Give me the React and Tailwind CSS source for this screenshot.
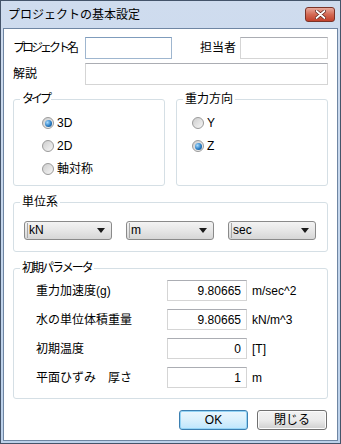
import React from 'react';

function Radio({ checked, label }) {
  return (
    <div className="flex items-center h-[22px] gap-[3px]">
      <span className="w-[12px] h-[12px] rounded-full border border-[#9a9a9a] bg-[linear-gradient(135deg,#cdcdcd,#f6f6f6)] flex items-center justify-center">
        {checked && (
          <span className="w-[7px] h-[7px] rounded-full bg-[radial-gradient(circle_at_35%_35%,#a8dcff,#2a7dc4_55%,#0d3f73)]" />
        )}
      </span>
      <span>{label}</span>
    </div>
  );
}

function Group({ title, className, legendClass, children }) {
  return (
    <fieldset className={`border border-[#d5dfe5] rounded-[3px] p-0 ${className}`}>
      <legend className={`ml-[6px] px-[2px] leading-[14px] ${legendClass || ''}`}>{title}</legend>
      {children}
    </fieldset>
  );
}

function Combo({ value }) {
  return (
    <div className="w-[88px] h-[19px] rounded-[3px] border border-[#8a8a8a] bg-[linear-gradient(#f3f3f3,#e6e6e6_50%,#d6d6d6)] flex items-center pl-[2px] pr-[6px]">
      <span className="flex-1 leading-[15px] border-l border-[#a8a8a8] pl-[1px]">{value}</span>
      <svg width="8" height="5" viewBox="0 0 8 5">
        <path d="M0 0 H8 L4 5 Z" fill="#1a1a1a" />
      </svg>
    </div>
  );
}

function Param({ label, value, unit }) {
  return (
    <div className="flex items-center h-[21px]">
      <span className="w-[131px]">{label}</span>
      <input
        readOnly
        value={value}
        className="w-[80px] h-[21px] border border-[#d5d5d5] border-t-[#abadb3] bg-white text-right pr-[5px] outline-none"
      />
      <span className="ml-[5px]">{unit}</span>
    </div>
  );
}

export default function App() {
  return (
    <div className="w-[341px] h-[444px] border border-[#44546a] bg-[linear-gradient(#cfdcee,#bcd1ea)] flex flex-col font-['Liberation_Sans','Noto_Sans_CJK_JP',sans-serif] text-[12px] text-black">
      {/* タイトルバー */}
      <div className="h-[27px] flex items-center pl-[7px] pr-[5px] shrink-0">
        <span className="flex-1 leading-[14px]">プロジェクトの基本設定</span>
        <div className="w-[30px] h-[15px] rounded-[3px] border border-[#7a3328] bg-[linear-gradient(#e8a99c,#d46a55_50%,#c2412b)] flex items-center justify-center">
          <svg width="11" height="9" viewBox="0 0 11 9">
            <path d="M1.5 1 L9.5 8 M9.5 1 L1.5 8" stroke="#5a2018" strokeWidth="3.2" strokeLinecap="round" />
            <path d="M1.5 1 L9.5 8 M9.5 1 L1.5 8" stroke="#ffffff" strokeWidth="1.8" strokeLinecap="round" />
          </svg>
        </div>
      </div>

      {/* 本体 */}
      <div className="flex-1 mx-[2px] mb-[2px] border border-[#6f86a3] bg-white px-[9px] pt-[8px] flex flex-col">
        <div className="flex items-center h-[22px]">
          <span className="w-[72px] tracking-[-3px]">プロジェクト名</span>
          <input readOnly className="w-[87px] h-[22px] border border-[#9fb6cf] border-t-[#7f9cbc] outline-none" />
          <span className="ml-[28px]">担当者</span>
          <input readOnly className="ml-auto w-[88px] h-[22px] border border-[#d5d5d5] border-t-[#abadb3] outline-none" />
        </div>
        <div className="flex items-center h-[22px] mt-[4px]">
          <span className="w-[72px]">解説</span>
          <input readOnly className="flex-1 h-[22px] border border-[#d5d5d5] border-t-[#abadb3] outline-none" />
        </div>

        <div className="flex gap-[11px] mt-[7px]">
          <Group title="タイプ" className="w-[152px] h-[94px]" legendClass="tracking-[-3px]">
            <div className="pl-[28px] pt-[6px] flex flex-col gap-[1px]">
              <Radio checked label="3D" />
              <Radio label="2D" />
              <Radio label="軸対称" />
            </div>
          </Group>
          <Group title="重力方向" className="w-[152px] h-[94px]">
            <div className="pl-[15px] pt-[6px] flex flex-col gap-[1px]">
              <Radio label="Y" />
              <Radio checked label="Z" />
            </div>
          </Group>
        </div>

        <Group title="単位系" className="mt-[9px] h-[57px]">
          <div className="pl-[10px] pt-[12px] flex gap-[14px]">
            <Combo value="kN" />
            <Combo value="m" />
            <Combo value="sec" />
          </div>
        </Group>

        <Group title="初期パラメータ" className="mt-[9px] h-[138px]" legendClass="tracking-[-2px]">
          <div className="pl-[22px] pt-[5px] flex flex-col gap-[8px]">
            <Param label="重力加速度(g)" value="9.80665" unit="m/sec^2" />
            <Param label="水の単位体積重量" value="9.80665" unit="kN/m^3" />
            <Param label="初期温度" value="0" unit="[T]" />
            <Param label="平面ひずみ　厚さ" value="1" unit="m" />
          </div>
        </Group>

        <div className="flex justify-end gap-[9px] mt-[11px] pr-[1px]">
          <button className="w-[69px] h-[20px] rounded-[3px] border border-[#3c7fb1] bg-[linear-gradient(#eaf6fd,#d9f0fc_50%,#bee6fd)] shadow-[inset_0_0_0_1px_#94d4f5] leading-[16px]">
            OK
          </button>
          <button className="w-[70px] h-[20px] rounded-[3px] border border-[#707070] bg-[linear-gradient(#f2f2f2,#ebebeb_50%,#cfcfcf)] shadow-[inset_0_0_0_1px_#fcfcfc] leading-[16px]">
            閉じる
          </button>
        </div>
      </div>
    </div>
  );
}
